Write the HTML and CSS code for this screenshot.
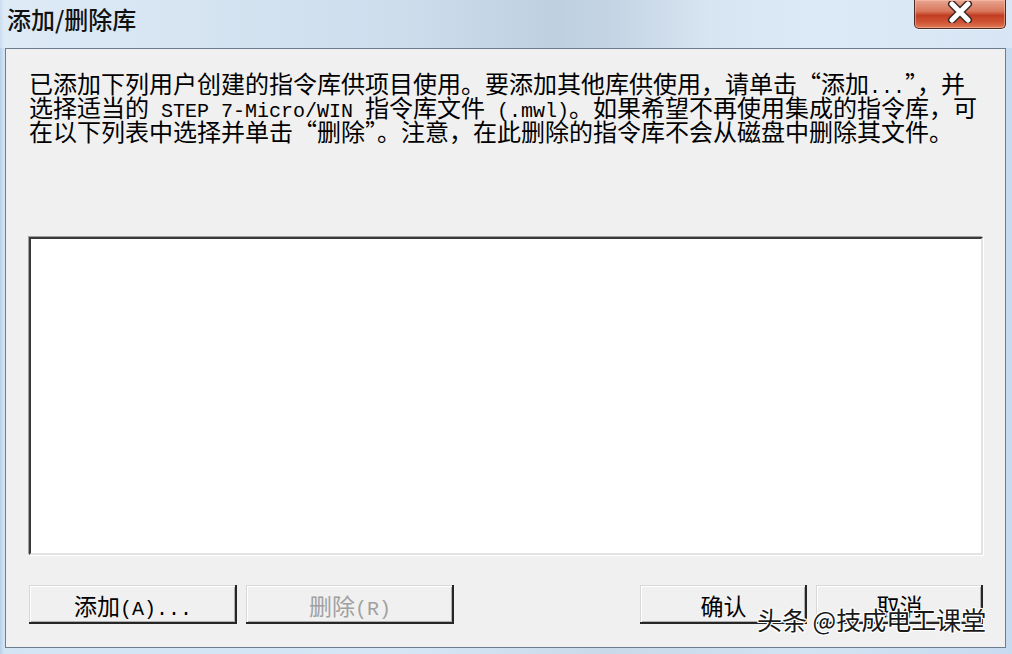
FILE: index.html
```html
<!DOCTYPE html>
<html lang="zh-CN">
<head>
    <meta charset="UTF-8">
    <title>添加/删除库</title>
    <link rel="stylesheet" href="styles.css">
</head>
<body>

    <div class="window">
        <div class="titlebar">
            <span class="title">添加/删除库</span>
            <div class="close-btn">
                <svg width="26" height="22" viewBox="0 0 26 22">
                    <path d="M5 3 L21 19 M21 3 L5 19" stroke="#3a2a28" stroke-width="8" stroke-linecap="round"/>
                    <path d="M5 3 L21 19 M21 3 L5 19" stroke="#ffffff" stroke-width="5" stroke-linecap="round"/>
                </svg>
            </div>
        </div>

        <div class="panel">
            <div class="intro">
                <div class="line">已添加下列用户创建的指令库供项目使用。要添加其他库供使用，请单击“添加<span class="latin">...</span>”，并</div>
                <div class="line">选择适当的<span class="latin"> STEP 7-Micro/WIN </span>指令库文件<span class="latin"> (.mwl)</span>。如果希望不再使用集成的指令库，可</div>
                <div class="line">在以下列表中选择并单击“删除”。注意，在此删除的指令库不会从磁盘中删除其文件。</div>
            </div>

            <div class="listbox"></div>

            <div class="button-row">
                <div class="button-group">
                    <button class="btn wide">添加<span class="latin">(A)...</span></button>
                    <button class="btn wide disabled">删除<span class="latin">(R)</span></button>
                </div>
                <div class="button-group">
                    <button class="btn narrow">确认</button>
                    <button class="btn narrow">取消</button>
                </div>
            </div>
        </div>
    </div>

    <!-- watermark from the source image -->
    <div class="watermark">头条 @技成电工课堂</div>

</body>
</html>
```

FILE: styles.css
```css
/* General reset */
* {
    margin: 0;
    padding: 0;
    box-sizing: border-box;
}

body {
    width: 1012px;
    height: 654px;
    overflow: hidden;
    font-family: "Noto Sans CJK SC", "Noto Sans", sans-serif;
    color: #000;
}

/* Window frame */
.window {
    width: 1012px;
    height: 654px;
    background: linear-gradient(90deg, #b9d0e8 0px, #d3e4f4 4px, #d6e6f5 40%, #c9d9e9 60%, #d2e3f3 80%, #c7dbf0 100%);
    display: flex;
    flex-direction: column;
}

.titlebar {
    height: 48px;
    flex-shrink: 0;
    display: flex;
    justify-content: space-between;
    align-items: flex-start;
    padding: 0 6px 0 7px;
    background: linear-gradient(90deg, rgba(255,255,255,0.25), rgba(150,170,190,0.25) 55%, rgba(255,255,255,0.2) 70%, rgba(255,255,255,0.3));
}

.title {
    font-size: 24px;
    line-height: 24px;
    margin-top: 7px;
    color: #111;
    font-weight: 500;
}

/* Red close button */
.close-btn {
    width: 92px;
    height: 29px;
    border: 1px solid #4a2c24;
    border-top: none;
    border-radius: 0 0 5px 5px;
    background: linear-gradient(180deg, #e9a591 0%, #d9775c 40%, #c23d22 55%, #cf5535 80%, #e07a55 100%);
    box-shadow: inset 0 0 0 1px rgba(255, 200, 180, 0.5), 0 1px 0 rgba(255,255,255,0.6);
    display: flex;
    justify-content: center;
    align-items: flex-start;
    padding-top: 1px;
}

/* Dialog body */
.panel {
    height: 600px;
    flex-shrink: 0;
    margin: 0 6px 0 5px;
    background-color: #f0f0f0;
    border: 1px solid #6c7d8f;
    padding: 22px 22px 0 23px;
}

.intro {
    font-size: 24px;
    white-space: nowrap;
}

.line {
    height: 24px;
    line-height: 24px;
}

.latin {
    font-family: "Liberation Mono", monospace;
    font-size: 20px;
    line-height: 0;
}

.listbox {
    margin-top: 94px;
    height: 318px;
    background-color: #ffffff;
    border-top: 2px solid #3a3a3a;
    border-left: 2px solid #3a3a3a;
    border-bottom: 2px solid #e3e3e3;
    border-right: 2px solid #e3e3e3;
    box-shadow: -1px -1px 0 #a0a0a0, 1px 1px 0 #ffffff;
}

/* Buttons */
.button-row {
    margin-top: 30px;
    display: flex;
    justify-content: space-between;
}

.button-group {
    display: flex;
    gap: 9px;
}

.btn {
    height: 39px;
    border: none;
    background-color: #f0f0f0;
    font-family: "Noto Sans CJK SC", sans-serif;
    font-size: 23px;
    line-height: 24px;
    color: #000;
    box-shadow: inset -2px -2px #262626, inset 1px 1px #d8d8d8, inset 2px 2px #ffffff, inset -3px -3px #b0b0b0;
}

.btn.wide {
    width: 208px;
}

.btn.narrow {
    width: 167px;
}

.btn.disabled {
    color: #a0a0a0;
}

.watermark {
    position: absolute;
    left: 757px;
    top: 604px;
    font-size: 25px;
    line-height: 30px;
    color: #1a1a1a;
    white-space: nowrap;
    text-shadow: 1px 0 #fff, -1px 0 #fff, 0 1px #fff, 0 -1px #fff, 1px 1px #fff, -1px -1px #fff, 1px -1px #fff, -1px 1px #fff;
}
```
